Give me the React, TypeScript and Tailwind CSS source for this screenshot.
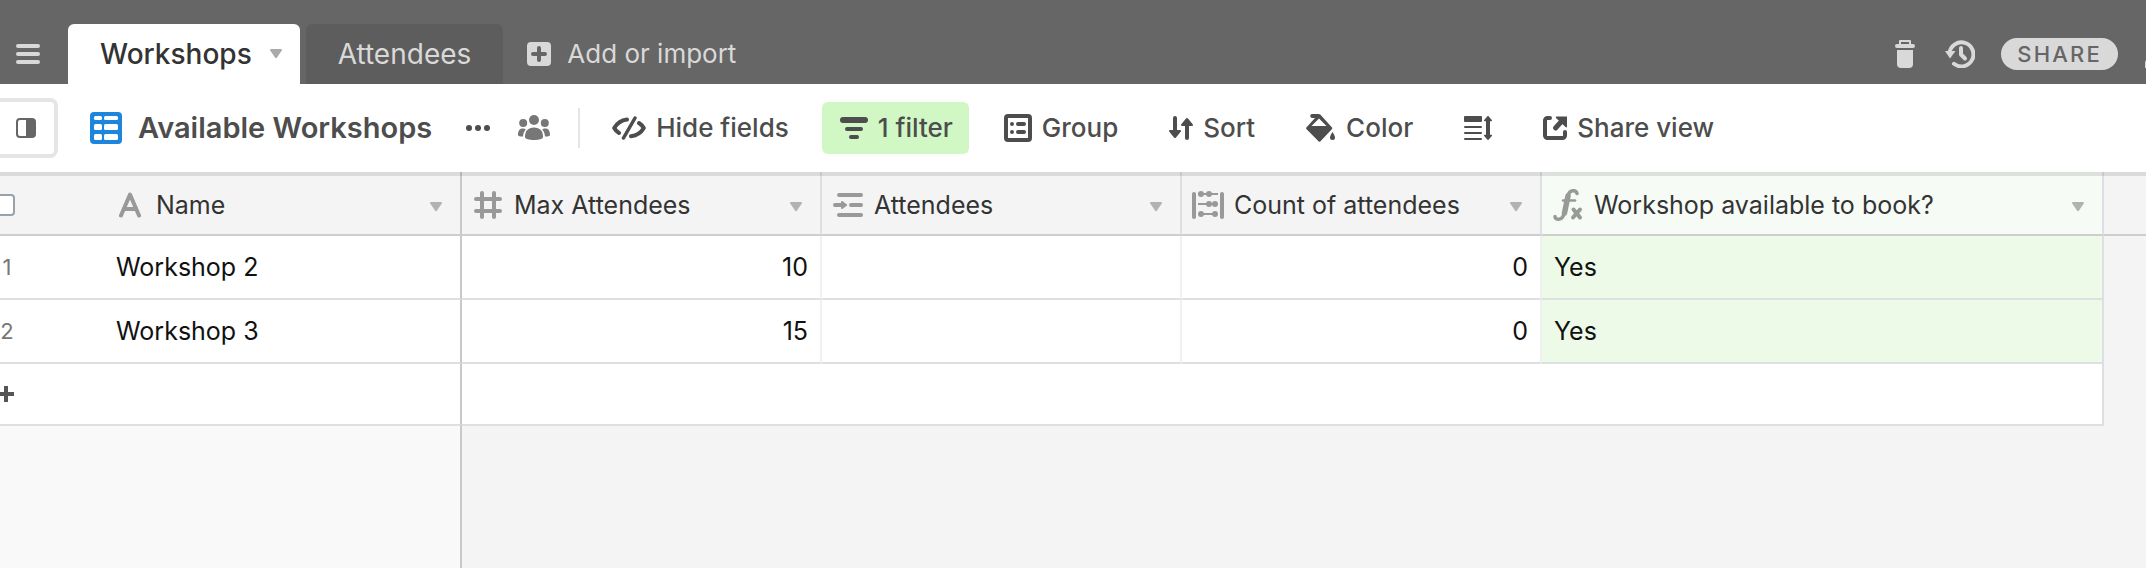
import { useState } from 'react';
import type { ReactNode } from 'react';

type Workshop = {
	id: number;
	name: string;
	maxAttendees: number;
	attendees: string;
	count: number;
	available: string;
};

const workshops: Workshop[] = [
	{ id: 1, name: 'Workshop 2', maxAttendees: 10, attendees: '', count: 0, available: 'Yes' },
	{ id: 2, name: 'Workshop 3', maxAttendees: 15, attendees: '', count: 0, available: 'Yes' },
];

function Caret({ className = '' }: { className?: string }) {
	return (
		<svg width="12" height="10" viewBox="0 0 12 10" fill="currentColor" className={`shrink-0 ${className}`}>
			<path d="M1 0h10c.9 0 1.200 .8.8 1.500L7 8.600c-.5.700-1.500.700-2 0L.2 1.500C-.2.800.1 0 1 0z" />
		</svg>
	);
}

function MenuIcon() {
	return (
		<svg width="24" height="20" viewBox="0 0 24 20" fill="currentColor">
			<rect width="24" height="4" rx="2" />
			<rect y="8" width="24" height="4" rx="2" />
			<rect y="16" width="24" height="4" rx="2" />
		</svg>
	);
}

function PlusBoxIcon() {
	return (
		<svg width="24" height="24" viewBox="0 0 24 24">
			<rect width="24" height="24" rx="4" fill="#d9d9d9" />
			<path d="M12 6v12M6 12h12" stroke="#666" strokeWidth="4" strokeLinecap="round" />
		</svg>
	);
}

function TrashIcon() {
	return (
		<svg width="20" height="28" viewBox="0 0 20 28" fill="currentColor">
			<path d="M5 0h10a1 1 0 0 1 1 1v3h2a2 2 0 0 1 0 4H2a2 2 0 0 1 0-4h2V1a1 1 0 0 1 1-1zm1 2v2h8V2z" fillRule="evenodd" />
			<path d="M2 10h16v14a4 4 0 0 1-4 4H6a4 4 0 0 1-4-4z" />
		</svg>
	);
}

function HistoryIcon() {
	return (
		<svg width="30" height="28" viewBox="0 0 30 28" fill="none" stroke="currentColor" strokeLinecap="round" strokeLinejoin="round">
			<path d="M4.500 13A12 12 0 1 1 9 23.800" strokeWidth="4" />
			<path d="M0 11h10.500L5 18.500z" fill="currentColor" stroke="none" />
			<path d="M16 8v6.500l4 4" strokeWidth="4" />
		</svg>
	);
}

function PersonIcon() {
	return (
		<svg width="32" height="32" viewBox="0 0 32 32" fill="currentColor">
			<circle cx="16" cy="9" r="7" />
			<path d="M0 30v-5c0-5 6-7 16-7s16 2 16 7v5z" />
		</svg>
	);
}

function SidebarIcon() {
	return (
		<svg width="20" height="20" viewBox="0 0 20 20">
			<rect x="1" y="1" width="18" height="18" rx="3" fill="#fff" stroke="#666" strokeWidth="2" />
			<path d="M10 1h6a3 3 0 0 1 3 3v12a3 3 0 0 1-3 3h-6z" fill="#666" />
		</svg>
	);
}

function GridIcon() {
	return (
		<svg width="32" height="32" viewBox="0 0 32 32" className="shrink-0">
			<rect width="32" height="32" rx="4" fill="#1d85dc" />
			<g fill="#fff">
				<rect x="4" y="4" width="8" height="4" rx="1.500" />
				<rect x="14" y="4" width="14" height="4" rx="1.500" />
				<rect x="4" y="12" width="8" height="6" rx="1.500" />
				<rect x="14" y="12" width="14" height="6" rx="1.500" />
				<rect x="4" y="22" width="8" height="6" rx="1.500" />
				<rect x="14" y="22" width="14" height="6" rx="1.500" />
			</g>
		</svg>
	);
}

function DotsIcon() {
	return (
		<svg width="24" height="6" viewBox="0 0 24 6" fill="currentColor">
			<circle cx="3" cy="3" r="3" />
			<circle cx="12" cy="3" r="3" />
			<circle cx="21" cy="3" r="3" />
		</svg>
	);
}

function PeopleIcon() {
	return (
		<svg width="32" height="26" viewBox="0 0 32 26" fill="currentColor">
			<circle cx="16" cy="5" r="5" />
			<circle cx="5.200" cy="8" r="4" />
			<circle cx="26.800" cy="8" r="4" />
			<path d="M7 22c0-6 3-9.500 9-9.500s9 3.500 9 9.500c0 2-4 3-9 3s-9-1-9-3z" />
			<path d="M0 20c0-4 1.500-6.500 4.500-6.500 1.500 0 2.500.3 3.300.9C6 16.300 5.200 18.500 5 21.500c-3 0-5-.5-5-1.500zM32 20c0-4-1.500-6.500-4.500-6.500-1.500 0-2.500.3-3.300.9 1.800 1.900 2.600 4.100 2.800 7.100 3 0 5-.5 5-1.500z" />
		</svg>
	);
}

function HideIcon() {
	return (
		<svg width="34" height="24" viewBox="0 0 34 24" fill="none" stroke="currentColor" strokeLinecap="round" strokeLinejoin="round">
			<path d="M23 2L11.500 22" strokeWidth="3.500" />
			<path d="M15 3.500C9 4.300 4.500 8 2.200 12c1.200 2.200 2.800 3.800 4.800 5" strokeWidth="4" />
			<path d="M27 7c2 1.300 3.600 2.900 4.800 5-2.300 4-6.800 7.500-12.800 8.300" strokeWidth="4" />
		</svg>
	);
}

function FilterIcon() {
	return (
		<svg width="28" height="22" viewBox="0 0 28 22" fill="currentColor">
			<rect width="28" height="6" rx="3" />
			<rect x="5" y="10" width="18" height="4" rx="2" />
			<rect x="9" y="18" width="10" height="4" rx="2" />
		</svg>
	);
}

function GroupIcon() {
	return (
		<svg width="28" height="28" viewBox="0 0 28 28" fill="currentColor">
			<rect x="2" y="2" width="24" height="24" rx="2" fill="none" stroke="currentColor" strokeWidth="4" />
			<circle cx="8" cy="10" r="2" />
			<circle cx="8" cy="18" r="2" />
			<rect x="12" y="8" width="10" height="4" rx="2" />
			<rect x="12" y="16" width="10" height="4" rx="2" />
		</svg>
	);
}

function SortIcon() {
	return (
		<svg width="24" height="24" viewBox="0 0 24 24" fill="currentColor">
			<path d="M4 2a2 2 0 0 1 4 0v12h3c1 0 1.300 1 .7 1.700l-4.700 5.700c-.6.700-1.400.700-2 0L.3 15.700C-.3 15 0 14 1 14h3z" />
			<path d="M20 22a2 2 0 0 1-4 0V10h-3c-1 0-1.300-1-.7-1.700L17 2.600c.6-.7 1.400-.7 2 0l4.700 5.700c.6.700.3 1.700-.7 1.700h-3z" />
		</svg>
	);
}

function ColorIcon() {
	return (
		<svg width="30" height="28" viewBox="0 0 30 28" fill="currentColor">
			<path d="M6 0h6.500c.8 0 1.500.3 2 .8l11.300 12.500c.6.700.6 1.300 0 2L14.500 27.200c-.6.700-1.400.700-2 0L.6 15.300c-.7-.7-.7-1.300 0-2L9 4H6.500a2 2 0 0 1-.5-4zm7 4.500L5.500 12h15z" fillRule="evenodd" />
			<path d="M26.500 18c1.600 2.400 2.500 4.200 2.500 5.600a2.500 2.500 0 0 1-5 0c0-1.400.9-3.200 2.500-5.600z" />
		</svg>
	);
}

function RowHeightIcon() {
	return (
		<svg width="28" height="24" viewBox="0 0 28 24" fill="currentColor">
			<rect width="18" height="6" rx="1" />
			<rect y="10" width="18" height="2" rx="1" />
			<rect y="16" width="18" height="2" rx="1" />
			<rect y="22" width="18" height="2" rx="1" />
			<path d="M23.200.4c.5-.5 1.100-.5 1.600 0l3 3.600c.5.600.2 1.200-.6 1.200H26v13.600h1.200c.8 0 1.100.6.600 1.200l-3 3.600c-.5.500-1.100.5-1.600 0l-3-3.600c-.5-.6-.2-1.200.6-1.200H22V5.200h-1.200c-.8 0-1.100-.6-.6-1.200z" />
		</svg>
	);
}

function ShareViewIcon() {
	return (
		<svg width="24" height="24" viewBox="0 0 24 24">
			<path d="M7 2H4.500A2.500 2.500 0 0 0 2 4.500v15A2.500 2.500 0 0 0 4.500 22h15a2.500 2.500 0 0 0 2.500-2.500V16" fill="none" stroke="currentColor" strokeWidth="4" strokeLinecap="round" />
			<path d="M12.500 12L18 6" stroke="currentColor" strokeWidth="5" strokeLinecap="round" />
			<path d="M13.500.5H24v10.500c-.5.500-1 .5-1.500 0l-9.500-9c-.4-.5-.2-1.200.5-1.500z" fill="currentColor" />
		</svg>
	);
}

function TextFieldIcon() {
	return (
		<svg width="22" height="26" viewBox="0 0 22 26" fill="none" stroke="currentColor" strokeWidth="4" strokeLinecap="round" strokeLinejoin="round">
			<polyline points="2,23.500 11,2.500 20,23.500" />
			<line x1="5" y1="17" x2="17" y2="17" />
		</svg>
	);
}

function NumberFieldIcon() {
	return (
		<svg width="28" height="28" viewBox="0 0 28 28" fill="none" stroke="currentColor" strokeWidth="4" strokeLinecap="round">
			<path d="M8 2v24M20 2v24M2 8h24M2 20h24" />
		</svg>
	);
}

function LinkFieldIcon() {
	return (
		<svg width="30" height="24" viewBox="0 0 30 24" fill="currentColor">
			<rect x="4" width="26" height="4" rx="2" />
			<rect x="16" y="10" width="14" height="4" rx="2" />
			<rect x="4" y="20" width="26" height="4" rx="2" />
			<path d="M2 10h6V9c0-1 1-1.400 1.700-.8l4 3c.6.500.6 1.100 0 1.600l-4 3C9 16.400 8 16 8 15v-1H2a2 2 0 0 1 0-4z" />
		</svg>
	);
}

function CountFieldIcon() {
	return (
		<svg width="32" height="28" viewBox="0 0 32 28" fill="currentColor">
			<rect y="1" width="4" height="27" rx="2" />
			<rect x="28" y="1" width="4" height="27" rx="2" />
			<path d="M6 3h20M6 13h20M8 23h16" stroke="currentColor" strokeWidth="2" />
			<circle cx="9" cy="3" r="3" />
			<circle cx="17" cy="3" r="3" />
			<circle cx="17" cy="13" r="3" />
			<circle cx="23" cy="13" r="3" />
			<circle cx="9" cy="23" r="3" />
			<circle cx="23" cy="23" r="3" />
		</svg>
	);
}

function FormulaFieldIcon() {
	return (
		<svg width="30" height="32" viewBox="0 0 30 32" fill="none" stroke="currentColor" strokeLinecap="round" strokeLinejoin="round">
			<path d="M24 4.500C23.500 2.500 21.500 1.500 19.500 1.800C16.500 2.300 15.300 4.500 14.500 8L11.500 23C10.700 27.500 8.500 30.500 5 30.200C3.200 30 2 29 2 27.500" strokeWidth="3.500" />
			<path d="M15 7l-3.500 17" strokeWidth="5.500" />
			<path d="M10 11.500h12" strokeWidth="2.500" />
			<path d="M20.500 20.500l6.500 8M27 20.500l-7 8" strokeWidth="4" />
		</svg>
	);
}

type HeaderCellProps = { icon: ReactNode; label: string; className?: string };

function HeaderCell({ icon, label, className = 'border-[#dce0e3]' }: HeaderCellProps) {
	return (
		<th className={`h-16 border-r-2 border-b-2 border-b-[#cecece] p-0 pt-1 font-normal ${className}`}>
			<div className="flex items-center gap-[10px] pr-[18px] pl-[10px]">
				<span className="flex w-8 shrink-0 justify-center text-[#999]">{icon}</span>
				<span className="flex-1 truncate text-left">{label}</span>
				<button type="button" aria-label={`${label} options`} className="pt-1 text-[#b2b2b2]">
					<Caret />
				</button>
			</div>
		</th>
	);
}

type ToolButtonProps = { icon: ReactNode; label?: string; title?: string; className?: string };

function ToolButton({ icon, label, title, className = '' }: ToolButtonProps) {
	return (
		<button
			type="button"
			aria-label={title}
			className={`flex h-[52px] shrink-0 items-center gap-[10px] rounded-md pr-4 pl-[18px] whitespace-nowrap ${className}`}
		>
			{icon}
			{label && <span>{label}</span>}
		</button>
	);
}

function App() {
	const [allSelected, setAllSelected] = useState<boolean>(false);

	return (
		<div className="flex min-h-screen flex-col overflow-hidden bg-[#f4f4f4] font-['Inter','Liberation_Sans',sans-serif] text-[25px] leading-8 text-[#333]">
			<header className="flex h-[84px] items-end overflow-hidden bg-[#666] pl-4 text-[26px] text-[#d9d9d9]">
				<button type="button" aria-label="Menu" className="mr-7 flex h-[60px] shrink-0 items-center">
					<MenuIcon />
				</button>
				<nav className="flex h-[60px] shrink-0 gap-[6px] text-[28px]">
					<div className="flex items-center gap-[18px] rounded-t-md bg-white pr-[18px] pl-8 font-medium text-[#333]">
						<a href="#workshops">Workshops</a>
						<button type="button" aria-label="Table options" className="text-[#aaa]">
							<Caret />
						</button>
					</div>
					<a href="#attendees" className="flex items-center rounded-t-md bg-[#5d5d5d] px-8">
						Attendees
					</a>
				</nav>
				<button type="button" className="ml-6 flex h-[60px] shrink-0 items-center gap-4">
					<PlusBoxIcon />
					Add or import
				</button>
				<div className="-mr-[31px] ml-auto flex h-[60px] shrink-0 items-center">
					<button type="button" aria-label="Trash" className="mr-[30px]">
						<TrashIcon />
					</button>
					<button type="button" aria-label="History" className="mr-[26px]">
						<HistoryIcon />
					</button>
					<button type="button" className="mr-[27px] flex h-8 items-center rounded-full bg-[#d9d9d9] px-4 text-[22px] font-medium tracking-widest text-[#666]">
						SHARE
					</button>
					<button type="button" aria-label="Account">
						<PersonIcon />
					</button>
				</div>
			</header>

			<div className="flex h-[88px] items-center bg-white text-[26px] font-medium text-[#4d4d4d]">
				<button type="button" aria-label="Toggle sidebar" className="mr-8 flex h-[60px] w-[58px] shrink-0 items-center rounded-r-lg border-4 border-l-0 border-[#e5e5e5] pl-4">
					<SidebarIcon />
				</button>
				<GridIcon />
				<h1 className="ml-4 text-[29px] font-semibold whitespace-nowrap">Available Workshops</h1>
				<button type="button" aria-label="View options" className="ml-[34px] shrink-0">
					<DotsIcon />
				</button>
				<button type="button" aria-label="Collaborators" className="ml-7 shrink-0 text-[#777]">
					<PeopleIcon />
				</button>
				<div className="ml-7 h-10 w-[2px] shrink-0 bg-[#e5e5e5]" />
				<div className="ml-[14px] flex gap-[17px]">
					<ToolButton icon={<HideIcon />} label="Hide fields" />
					<ToolButton icon={<FilterIcon />} label="1 filter" className="bg-[#d1f7c4]" />
					<ToolButton icon={<GroupIcon />} label="Group" />
					<ToolButton icon={<SortIcon />} label="Sort" />
					<ToolButton icon={<ColorIcon />} label="Color" />
					<ToolButton icon={<RowHeightIcon />} title="Row height" />
					<ToolButton icon={<ShareViewIcon />} label="Share view" />
				</div>
			</div>

			<main className="relative flex flex-1 flex-col">
				<table className="w-full table-fixed border-separate border-spacing-0">
					<colgroup>
						<col className="w-[104px]" />
						<col className="w-[358px]" />
						<col className="w-[360px]" />
						<col className="w-[360px]" />
						<col className="w-[360px]" />
						<col className="w-[562px]" />
						<col />
					</colgroup>
					<thead>
						<tr>
							<th className="border-b-2 border-[#cecece] p-0 pt-1">
								<div className="-ml-6 flex w-14 justify-center">
									<input
										type="checkbox"
										aria-label="Select all rows"
										checked={allSelected}
										onChange={(event) => setAllSelected(event.target.checked)}
										className="size-[22px] appearance-none rounded-sm border-2 border-[#98a2ab] bg-white checked:bg-[#1d85dc]"
									/>
								</div>
							</th>
							<HeaderCell icon={<TextFieldIcon />} label="Name" className="border-r-[#c9c9c9]" />
							<HeaderCell icon={<NumberFieldIcon />} label="Max Attendees" />
							<HeaderCell icon={<LinkFieldIcon />} label="Attendees" />
							<HeaderCell icon={<CountFieldIcon />} label="Count of attendees" />
							<HeaderCell icon={<FormulaFieldIcon />} label="Workshop available to book?" className="border-r-[#dce0e3] bg-[#f6fbf5]" />
							<td className="border-b-2 border-[#cecece]" />
						</tr>
					</thead>
					<tbody className="text-[#111]">
						{workshops.map((workshop) => (
							<tr key={workshop.id}>
								<td className="h-16 border-b-2 border-[#dce0e3] bg-white p-0 text-[22px] text-[#777]">
									<div className="-ml-6 w-[62px] text-center">{workshop.id}</div>
								</td>
								<td className="border-r-2 border-b-2 border-r-[#c9c9c9] border-b-[#dce0e3] bg-white px-3 py-0">{workshop.name}</td>
								<td className="border-r-2 border-b-2 border-r-[#f0f0f0] border-b-[#dce0e3] bg-white px-3 py-0 text-right">{workshop.maxAttendees}</td>
								<td className="border-r-2 border-b-2 border-r-[#f0f0f0] border-b-[#dce0e3] bg-white px-3 py-0">{workshop.attendees}</td>
								<td className="border-r-2 border-b-2 border-r-[#f0f0f0] border-b-[#dce0e3] bg-white px-3 py-0 text-right">{workshop.count}</td>
								<td className="border-r-2 border-b-2 border-[#dce0e3] bg-[#edfae8] px-3 py-0">{workshop.available}</td>
								<td />
							</tr>
						))}
						<tr>
							<td className="h-[62px] border-b-2 border-[#dce0e3] bg-white p-0">
								<button type="button" aria-label="Add row" className="-ml-6 flex w-[60px] justify-center text-[#555]">
									<svg width="16" height="16" viewBox="0 0 16 16" fill="none" stroke="currentColor" strokeWidth="4">
										<path d="M8 0v16M0 8h16" />
									</svg>
								</button>
							</td>
							<td className="border-r-2 border-b-2 border-r-[#c9c9c9] border-b-[#dce0e3] bg-white" />
							<td colSpan={4} className="border-r-2 border-b-2 border-[#dce0e3] bg-white" />
							<td />
						</tr>
					</tbody>
				</table>
				<div className="w-[462px] flex-1 border-r-2 border-[#c9c9c9] bg-[#f9f9f9]" />
				<div className="pointer-events-none absolute inset-x-0 top-0 h-1 bg-black/10" />
			</main>
		</div>
	);
}

export default App;
